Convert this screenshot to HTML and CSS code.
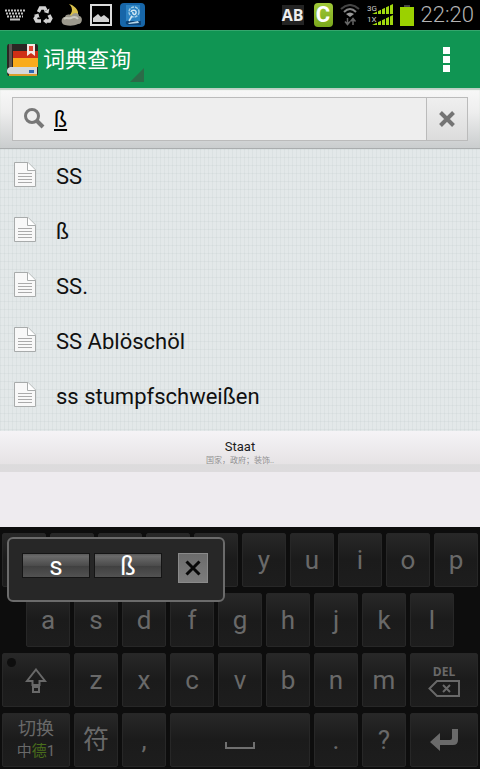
FILE: index.html
```
<!DOCTYPE html>
<html lang="zh-CN">
<head>
    <meta charset="UTF-8">
    <meta name="viewport" content="width=device-width, initial-scale=1.0">
    <title>词典查询</title>
    <link rel="stylesheet" href="styles.css">
</head>
<body>
    <!-- Status bar -->
    <div class="status-bar">
        <div class="status-left">
            <svg width="20" height="12" viewBox="0 0 20 12" stroke="#c4c4c4" fill="none">
                <path d="M0 1.5H20" stroke-width="2" stroke-dasharray="2 1"/>
                <path d="M1 4.5H19" stroke-width="2" stroke-dasharray="2 1"/>
                <path d="M2 7.5H18" stroke-width="2" stroke-dasharray="2 1"/>
                <path d="M5 10.5H15" stroke-width="2"/>
            </svg>
            <svg width="20" height="18" viewBox="0 0 20 18">
                <g fill="none" stroke="#d2d2d2" stroke-width="3.4">
                    <path d="M5.4 6L7.4 2H11.6L13 4.4"/>
                    <path d="M16 9L17.8 12.4L16.4 15H13"/>
                    <path d="M8 15H3.6L2.2 12.4L4 9.6"/>
                </g>
                <path d="M10.6 6L15.4 7.4L16.4 2.4zM13.6 12V18L10 15zM0.6 9L5.4 7.4L6.6 12z" fill="#d2d2d2"/>
            </svg>
            <svg width="21" height="22" viewBox="0 0 21 22">
                <path d="M8 0C13 4 12 12 3 14C8 20 18 15 17 8C16 4 12 1 8 0z" fill="#d9c04a"/>
                <path d="M4 21C-1 20 0 13 4 13C5 10 9 10 10 12C12 8 18 8 18 12C22 12 22 20 17 20C13 22 8 22 4 21z" fill="#9b988c"/>
                <path d="M3 15C5 13 8 15 10 14S15 12 17 15" stroke="#cbc9be" stroke-width="2" fill="none"/>
            </svg>
            <svg width="22" height="22" viewBox="0 0 22 22">
                <path d="M1 1H21V21H1z" fill="none" stroke="#dcdcdc" stroke-width="2"/>
                <path d="M3 18V14L8 10L11 13L14 11L19 15V18z" fill="#d2d2d2"/>
            </svg>
            <svg width="25" height="24" viewBox="0 0 25 24">
                <rect width="25" height="24" rx="4" fill="#1766a8"/>
                <path d="M6 2H20V20H6z" fill="#2b82c2"/>
                <path d="M6 21C5 18 7 17 9 18H21V22H8z" fill="#0c4376"/>
                <path d="M8 20L18 18L19 20L9 21z" fill="#b7d7ea"/>
                <circle cx="14" cy="9" r="5" fill="none" stroke="#9fcbe6" stroke-width="1.5" stroke-dasharray="3 1"/>
                <path d="M11 9C12 6 17 7 16 10S12 11 13 9M12 13L9 18" fill="none" stroke="#cfe6f3" stroke-width="1.5"/>
            </svg>
        </div>
        <div class="status-right">
            <span class="badge-ab">AB</span>
            <span class="badge-c">C</span>
            <svg width="20" height="22" viewBox="0 0 20 22" fill="none">
                <path d="M1 5Q10 -3 19 5" stroke="#444" stroke-width="2"/>
                <path d="M4 8Q10 2 16 8" stroke="#858585" stroke-width="2"/>
                <path d="M6 10Q10 7 14 10L10 13z" fill="#999"/>
                <path d="M7.5 14V20M5 17.5L7.5 20.5L10 17.5M13 21V15M10.5 17.5L13 14.5L15.5 17.500" stroke="#666" stroke-width="1.5"/>
            </svg>
            <svg class="signal" width="26" height="22" viewBox="0 0 26 22">
                <path d="M5 10L26 0V10zM5 21L26 11V21z" fill="#a1d90f"/>
                <path d="M10.5 0V22M14.5 0V22M18.5 0V22M22.5 0V22" stroke="#000"/>
                <text x="0" y="7">3G</text>
                <text x="0" y="18">1X</text>
            </svg>
            <svg width="14" height="21" viewBox="0 0 14 21">
                <path d="M0 2H14V21H0z" fill="#9bd100"/>
                <path d="M4 0H10V2H4z" fill="#444"/>
            </svg>
            <time class="clock">22:20</time>
        </div>
    </div>

    <!-- Action bar -->
    <header class="action-bar">
        <svg class="logo" width="34" height="34" viewBox="0 0 34 34">
            <path d="M4 1H31Q33 1 33 3V30Q33 33 30 33H4Q2 33 2 30V4Q2 1 4 1z" fill="#2b2724"/>
            <path d="M8 8H33V15H8z" fill="#cf2f16"/>
            <path d="M8 15H33V24H8z" fill="#f9ab1c"/>
            <path d="M4 1H7V24H4z" fill="#5c5652"/>
            <path d="M5 24H32V31H5Q2 31 2 28T5 24z" fill="#d5d8da"/>
            <path d="M4 32H32" stroke="#d9a02c" stroke-width="2"/>
            <path d="M24 27H29V30H24z" fill="#2d68b3"/>
            <path d="M22 1H30V13L26 10L22 13z" fill="#f3e9e4"/>
            <path d="M24 3H28V8H24z" fill="#dc4632"/>
        </svg>
        <button class="title">词典查询</button>
        <button class="more" aria-label="更多">
            <svg width="7" height="25" viewBox="0 0 7 25" fill="#fff">
                <path d="M0 0H7V7H0zM0 9H7V16H0zM0 18H7V25H0z"/>
            </svg>
        </button>
    </header>

    <!-- Search -->
    <form class="search">
        <div class="search-box">
            <svg width="22" height="22" viewBox="0 0 22 22" fill="none" stroke="#777">
                <circle cx="9" cy="8" r="6.5" stroke-width="3"/>
                <path d="M13.5 12.5L20 19" stroke-width="4"/>
            </svg>
            <input type="text" value="ß" aria-label="搜索">
            <button type="button" class="clear" aria-label="清除">
                <svg width="16" height="16" viewBox="0 0 16 16" stroke="#747474" stroke-width="4">
                    <path d="M1.5 1.5L14.5 14.5M14.5 1.5L1.5 14.5"/>
                </svg>
            </button>
        </div>
    </form>

    <svg class="symbols" width="0" height="0">
        <symbol id="doc" viewBox="0 0 22 25">
            <path d="M0.5 0.5H14L21.5 8V24.5H0.5z" fill="#f8f8f8" stroke="#a8abab"/>
            <path d="M13.5 0.5V8.5H21.5" fill="#fff" stroke="#a8abab"/>
            <path d="M4 11.5H18M4 14.5H18M4 17.5H18M4 20.5H18" stroke="#aaa"/>
        </symbol>
    </svg>

    <ul class="results">
        <li><a href="#"><svg class="doc"><use href="#doc"/></svg>SS</a></li>
        <li><a href="#"><svg class="doc"><use href="#doc"/></svg>ß</a></li>
        <li><a href="#"><svg class="doc"><use href="#doc"/></svg>SS.</a></li>
        <li><a href="#"><svg class="doc"><use href="#doc"/></svg>SS Ablöschöl</a></li>
        <li><a href="#"><svg class="doc"><use href="#doc"/></svg>ss stumpfschweißen</a></li>
    </ul>

    <button class="daily">
        <span class="daily-word">Staat</span>
        <span class="daily-meaning">国家，政府；装饰..</span>
    </button>

    <!-- Keyboard -->
    <div class="keyboard">
        <div class="row">
            <button class="key" aria-label="q"></button>
            <button class="key" aria-label="w"></button>
            <button class="key" aria-label="e"></button>
            <button class="key" aria-label="r"></button>
            <button class="key" aria-label="t"></button>
            <button class="key">y</button>
            <button class="key">u</button>
            <button class="key">i</button>
            <button class="key">o</button>
            <button class="key">p</button>
        </div>
        <div class="row row-home">
            <button class="key">a</button>
            <button class="key">s</button>
            <button class="key">d</button>
            <button class="key">f</button>
            <button class="key">g</button>
            <button class="key">h</button>
            <button class="key">j</button>
            <button class="key">k</button>
            <button class="key">l</button>
        </div>
        <div class="row">
            <button class="key wide shift" aria-label="Shift">
                <svg width="22" height="25" viewBox="0 0 22 25" fill="none" stroke="#696969" stroke-width="2">
                    <path d="M11 1.5L20 13H14.5V17H7.5V13H2z"/>
                    <path d="M8 19H14V24H8z"/>
                </svg>
            </button>
            <button class="key">z</button>
            <button class="key">x</button>
            <button class="key">c</button>
            <button class="key">v</button>
            <button class="key">b</button>
            <button class="key">n</button>
            <button class="key">m</button>
            <button class="key wide stacked">
                <span class="del">DEL</span>
                <svg width="32" height="17" viewBox="0 0 32 17" fill="none" stroke="#696969" stroke-width="2">
                    <path d="M9 1H31V16H9L1.5 8.5z"/>
                    <path d="M15 5L22 12M22 5L15 12"/>
                </svg>
            </button>
        </div>
        <div class="row">
            <button class="key wide stacked">
                <span class="switch">切换</span>
                <span class="langs">中<b>德</b>1</span>
            </button>
            <button class="key">符</button>
            <button class="key">,</button>
            <button class="key space" aria-label="空格">
                <svg width="30" height="8" viewBox="0 0 30 8" fill="none" stroke="#707070" stroke-width="2">
                    <path d="M1 0V6H29V0"/>
                </svg>
            </button>
            <button class="key">.</button>
            <button class="key">?</button>
            <button class="key wide" aria-label="Enter">
                <svg width="28" height="22" viewBox="0 0 28 22">
                    <path d="M22 0H28V11Q28 16 23 16H10V22L0 13L10 4V11H20Q22 11 22 9z" fill="#6a6a6a"/>
                </svg>
            </button>
        </div>

        <div class="popup">
            <button class="choice">s</button>
            <button class="choice">ß</button>
            <button class="close" aria-label="关闭">
                <svg width="16" height="16" viewBox="0 0 16 16" stroke="#080808" stroke-width="3">
                    <path d="M1.5 1.5L14.5 14.5M14.5 1.5L1.5 14.5"/>
                </svg>
            </button>
        </div>
    </div>
</body>
</html>
```
FILE: styles.css
```
* {
    box-sizing: border-box;
}
body {
    margin: 0;
    min-height: 100vh;
    display: flex;
    flex-direction: column;
    font-family: Roboto, "Noto Sans CJK SC", sans-serif;
    background-color: #eeebef;
}
button {
    margin: 0;
    padding: 0;
    border: none;
    background: none;
    font-family: inherit;
    cursor: pointer;
}
svg {
    flex: none;
}
.symbols {
    display: none;
}

/* Status bar */
.status-bar {
    display: flex;
    justify-content: space-between;
    align-items: center;
    height: 30px;
    padding: 0 6px 0 5px;
    background-color: #000;
}
.status-left, .status-right {
    display: flex;
    align-items: center;
    gap: 8px;
}
.status-right {
    gap: 7px;
}
.badge-ab {
    width: 22px;
    margin-right: 3px;
    background-color: #242424;
    color: #ededed;
    font: bold 16px/20px "Open Sans", sans-serif;
    text-align: center;
}
.badge-c {
    width: 19px;
    border-radius: 4px;
    background: linear-gradient(#a0c838, #7aa81c);
    color: #fff;
    font: bold 22px/24px Roboto, sans-serif;
    text-align: center;
}
.signal text {
    font: 8px Roboto, sans-serif;
    fill: #ccc;
}
.clock {
    font-size: 22px;
    line-height: 30px;
    font-weight: 300;
    color: #b4b4b4;
}

/* Action bar */
.action-bar {
    display: flex;
    align-items: center;
    height: 58px;
    padding: 0 24px 0 5px;
    background-color: #109553;
    border-top: 1px solid #35a66d;
}
.title {
    position: relative;
    height: 44px;
    padding: 0 13px 0 4px;
    font-size: 22px;
    line-height: 44px;
    color: #fff;
}
.title::after {
    content: "";
    position: absolute;
    right: 0;
    bottom: 0;
    border-left: 14px solid transparent;
    border-bottom: 14px solid #2b6b48;
}
.more {
    display: flex;
    align-items: center;
    height: 44px;
    margin-left: auto;
    padding: 0 6px;
}

/* Search */
.search {
    padding: 9px 12px 7px;
    background: linear-gradient(#f8f8f8, #eee 40%, #cacdce);
    border-bottom: 1px solid #a9acad;
    box-shadow: inset 0 2px 1px #bccfc4;
}
.search-box {
    display: flex;
    align-items: center;
    height: 44px;
    padding-left: 10px;
    background-color: #eee;
    border: 1px solid #bbb;
}
.search input {
    flex: 1;
    min-width: 0;
    height: 42px;
    padding: 0 9px;
    border: none;
    outline: none;
    background: none;
    font-family: Roboto, sans-serif;
    font-size: 22px;
    color: #000;
    text-decoration: underline;
}
.clear {
    display: flex;
    align-items: center;
    justify-content: center;
    width: 41px;
    height: 42px;
    border-left: 1px solid #bbb;
    background: linear-gradient(#efefef, #dcdcdc);
}

/* Results */
.results {
    margin: 0;
    padding: 0 0 7px;
    list-style: none;
    background-color: #e3e8e9;
    background-image:
        repeating-linear-gradient(90deg, rgba(120,140,140,0.07) 0 1px, transparent 1px 4px),
        repeating-linear-gradient(rgba(120,140,140,0.07) 0 1px, transparent 1px 8px);
}
.results a {
    display: flex;
    align-items: center;
    gap: 20px;
    height: 55px;
    padding: 0 14px;
    font-size: 22px;
    color: #101010;
    text-decoration: none;
}
.doc {
    width: 22px;
    height: 25px;
    margin-bottom: 4px;
}

/* Daily word */
.daily {
    display: flex;
    flex-direction: column;
    align-items: center;
    padding: 7px 0 6px;
    background: linear-gradient(#f5f3f6, #e6e3e5 80%, #dcdbdc 82%, #dddbdd);
}
.daily-word {
    font-size: 13px;
    line-height: 18px;
    color: #1c1c1c;
}
.daily-meaning {
    font-family: Roboto, "Noto Sans CJK TC", sans-serif;
    font-size: 8px;
    line-height: 10px;
    color: #909090;
}

/* Keyboard */
.keyboard {
    position: relative;
    display: grid;
    gap: 6px;
    margin-top: auto;
    padding: 6px 0 2px;
    background-color: #0d0d0d;
}
.row {
    display: grid;
    grid-template-columns: repeat(20, 1fr);
}
.row-home .key:first-child {
    grid-column: 2 / span 2;
}
.key {
    grid-column: span 2;
    display: flex;
    align-items: center;
    justify-content: center;
    height: 54px;
    margin: 0 2px;
    border: 1px solid #272727;
    border-radius: 2px;
    background: linear-gradient(#282828, #1b1b1b 50%, #1d1d1d);
    font-size: 26px;
    line-height: 30px;
    color: #696969;
}
.wide {
    grid-column: span 3;
}
.space {
    grid-column: span 6;
    padding-top: 12px;
}
.shift {
    position: relative;
}
.shift::before {
    content: "";
    position: absolute;
    left: 4px;
    top: 4px;
    width: 9px;
    height: 9px;
    border-radius: 50%;
    background-color: #0e0e0e;
}
.stacked {
    flex-direction: column;
}
.del {
    font: bold 12px/16px "Open Sans", sans-serif;
}
.switch {
    font-size: 18px;
    line-height: 22px;
}
.langs {
    font-size: 15px;
    line-height: 22px;
}
.langs b {
    font-weight: normal;
    color: #496d1b;
}

/* Popup with letter choices */
.popup {
    position: absolute;
    left: 7px;
    top: 10px;
    display: flex;
    align-items: flex-start;
    gap: 4px;
    width: 218px;
    height: 65px;
    padding: 14px 15px 0 13px;
    border: 2px solid #6b6b6b;
    border-radius: 6px;
    background-color: #272727;
}
.choice {
    width: 68px;
    height: 25px;
    border: 1px solid #151515;
    background: linear-gradient(#5a5a5a, #6a6a6a 10%, #4c4c4c 50%, #404040 52%, #525252);
    font-size: 26px;
    line-height: 25px;
    color: #fff;
}
.close {
    display: flex;
    align-items: center;
    justify-content: center;
    width: 30px;
    height: 30px;
    margin-left: auto;
    border: 1px solid #8a8a8a;
    background: linear-gradient(#6c6c6c, #7c7c7c);
}
```
